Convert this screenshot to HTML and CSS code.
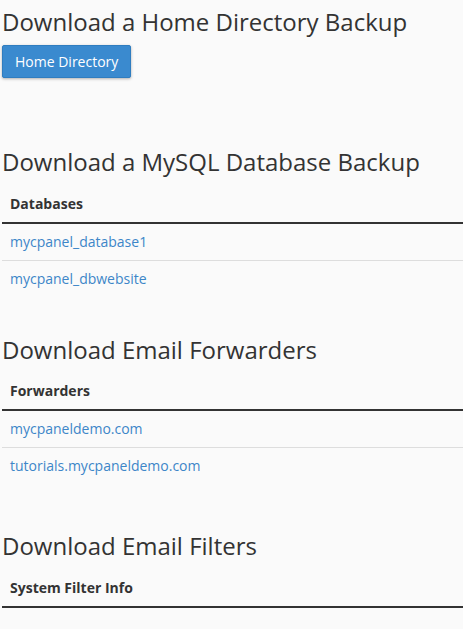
FILE: index.html
```html
<!DOCTYPE html>
<html lang="en">
<head>
<meta charset="utf-8">
<title>Backups</title>
<link rel="stylesheet" href="styles.css">
</head>
<body>
<div class="page">
  <section class="section section-home">
    <h2 class="title">Download a Home Directory Backup</h2>
    <button class="btn-primary" type="button">Home Directory</button>
  </section>

  <section class="section section-db">
    <h2 class="title">Download a MySQL Database Backup</h2>
    <table class="data-table">
      <thead>
        <tr><th>Databases</th></tr>
      </thead>
      <tbody>
        <tr><td><a href="#">mycpanel_database1</a></td></tr>
        <tr><td><a href="#">mycpanel_dbwebsite</a></td></tr>
      </tbody>
    </table>
  </section>

  <section class="section section-fwd">
    <h2 class="title">Download Email Forwarders</h2>
    <table class="data-table">
      <thead>
        <tr><th>Forwarders</th></tr>
      </thead>
      <tbody>
        <tr><td><a href="#">mycpaneldemo.com</a></td></tr>
        <tr><td><a href="#">tutorials.mycpaneldemo.com</a></td></tr>
      </tbody>
    </table>
  </section>

  <section class="section section-filters">
    <h2 class="title">Download Email Filters</h2>
    <table class="data-table">
      <thead>
        <tr><th>System Filter Info</th></tr>
      </thead>
      <tbody>
        <tr><td></td></tr>
      </tbody>
    </table>
  </section>
</div>
</body>
</html>
```

FILE: styles.css
```css
html, body {
  margin: 0;
  padding: 0;
  background: #fafafa;
}

body {
  font-family: "Open Sans", "Liberation Sans", Arial, sans-serif;
  font-size: 14px;
  line-height: 20px;
  color: #333333;
}

.page {
  padding: 9px 0 0 2px;
}

.section {
  display: flex;
  flex-direction: column;
  align-items: flex-start;
}

.section-home {
  margin-bottom: 71px;
}

.section-db {
  margin-bottom: 40px;
}

.section-fwd {
  margin-bottom: 49px;
}

.title {
  margin: 0 0 10px 0;
  font-size: 24px;
  line-height: 26.4px;
  font-weight: 400;
  color: #333333;
}

.btn-primary {
  font-family: inherit;
  font-size: 14px;
  line-height: 19px;
  padding: 6px 12px;
  color: #ffffff;
  background: #3a8acf;
  border: 1px solid #2f7dc0;
  border-radius: 2px;
  box-shadow: 0 1px 3px rgba(0, 0, 0, 0.3);
  cursor: pointer;
}

.data-table {
  width: 100%;
  border-collapse: collapse;
  border-spacing: 0;
}

.data-table th {
  text-align: left;
  font-weight: 700;
  padding: 8px;
  border-bottom: 2px solid #333333;
}

.data-table td {
  padding: 8px;
  border-top: 1px solid #dddddd;
}

.data-table tbody tr:first-child td {
  border-top: 0;
}

.data-table a {
  color: #3d86c8;
  text-decoration: none;
}
```
